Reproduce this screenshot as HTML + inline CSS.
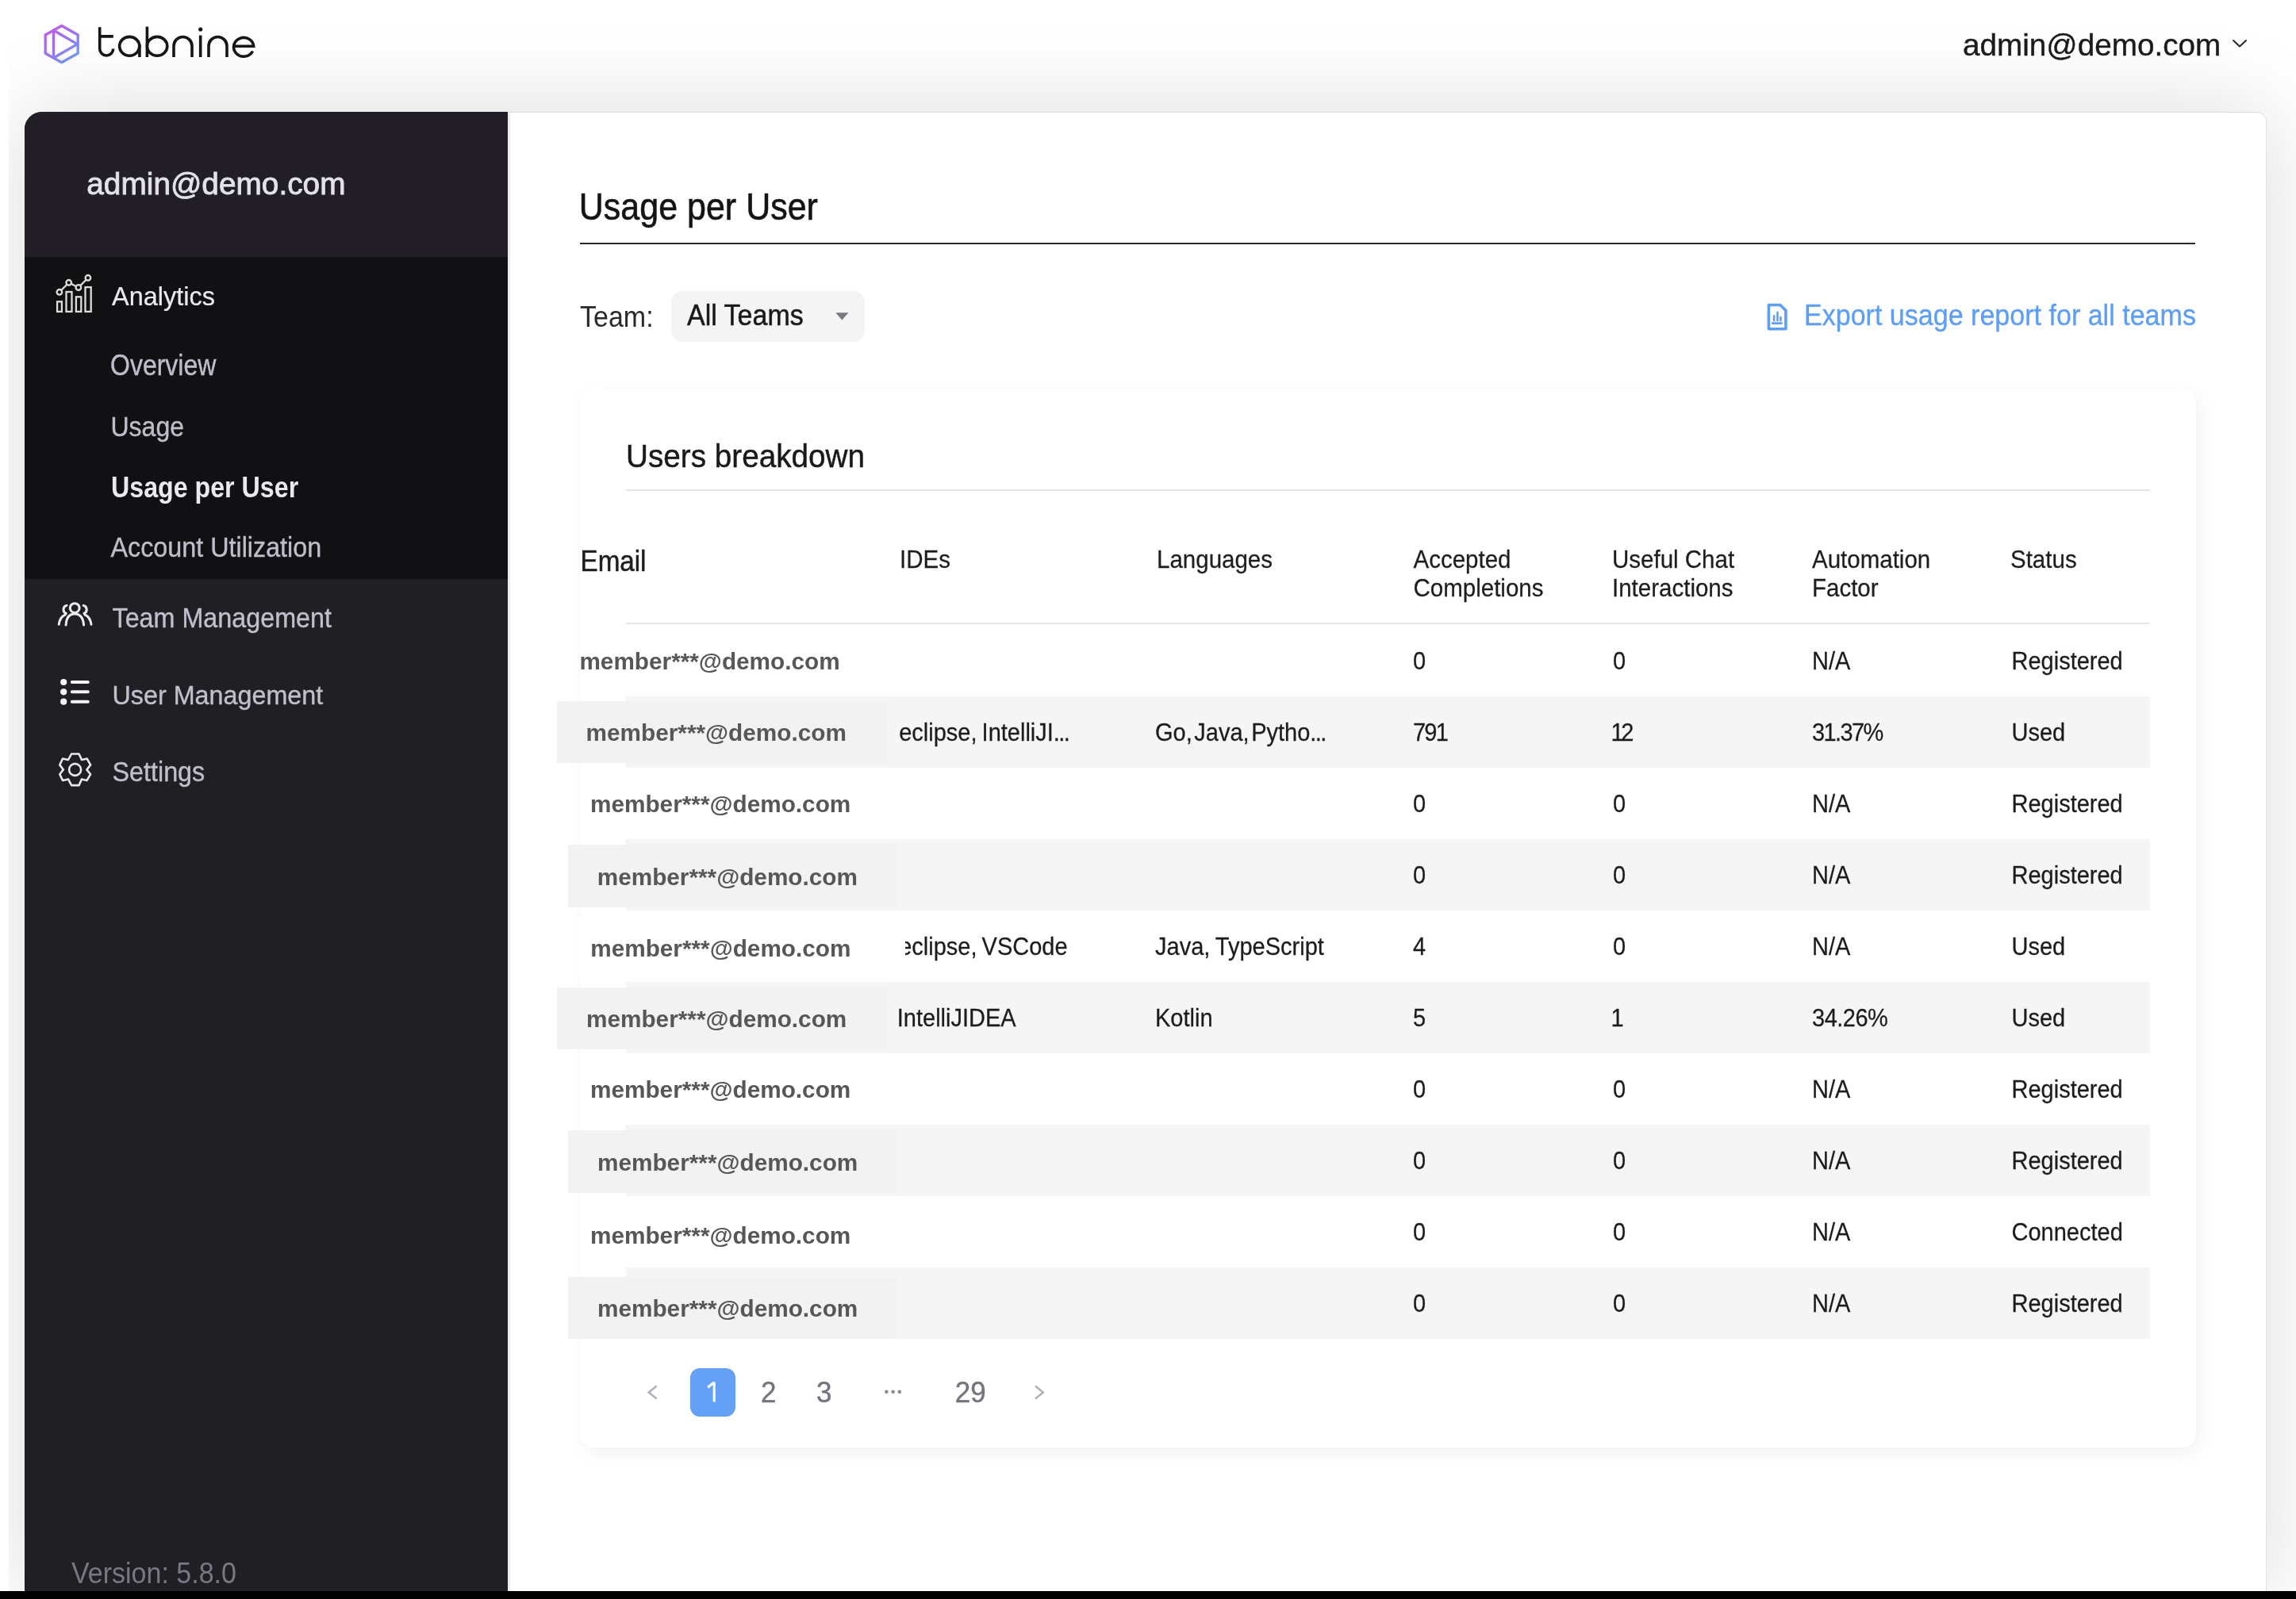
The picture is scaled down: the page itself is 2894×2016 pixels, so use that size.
<!DOCTYPE html>
<html><head><meta charset="utf-8"><style>
html,body{margin:0;padding:0;width:2894px;height:2016px;overflow:hidden;background:#fff;}
body{position:relative;font-family:"Liberation Sans",sans-serif;}
.abs{position:absolute;}
.t{position:absolute;white-space:nowrap;line-height:1;}
#wrap{position:absolute;left:0;top:0;width:2894px;height:2016px;will-change:transform;}
#frame{position:absolute;left:11px;top:0;width:2883px;height:2016px;overflow:hidden;}
#card{position:absolute;left:20px;top:141px;width:2826px;height:1875px;border-radius:22px 12px 0 0;box-shadow:0 0 116px rgba(0,0,0,0.145);background:#fff;}
</style></head><body>
<div id="frame"><div id="card"></div></div>
<div id="wrap">
<div class="t" style="left:2474px;top:37.84px;font-size:38.7px;color:#1b1b1b;-webkit-text-stroke:0.4px #1b1b1b;">admin@demo.com</div>
<svg class="abs" style="left:2800px;top:40px" width="40" height="30" viewBox="2800 40 40 30"><path d="M2815 51 L2823 58.5 L2831 51" fill="none" stroke="#262626" stroke-width="2" stroke-linecap="round" stroke-linejoin="round"/></svg>
<svg class="abs" style="left:0;top:0" width="340" height="100" viewBox="0 0 340 100"><defs><linearGradient id="lg" x1="57" y1="32" x2="98" y2="79" gradientUnits="userSpaceOnUse"><stop offset="0" stop-color="#c855e6"/><stop offset="0.5" stop-color="#9a72ee"/><stop offset="1" stop-color="#62a4f3"/></linearGradient></defs><g fill="none" stroke="url(#lg)" stroke-width="3.3" stroke-linejoin="round" stroke-linecap="round"><path d="M77.7 32.5 L98.2 44 L98.2 67.3 L77.7 78.7 L57.2 67.3 L57.2 44 Z"/><path d="M67.5 38.2 V73 M67.5 38.2 L97.5 55.6 L67.5 73"/></g><g fill="none" stroke="#161616" stroke-width="3.6"><path d="M125.7 34.3 V61.5 A8.5 8.5 0 0 0 142.7 61.5 M125.7 45.9 H142.8"/><ellipse cx="163.2" cy="58.3" rx="12.6" ry="11.9"/><path d="M175.9 56 V72"/><path d="M185.4 33.6 V72"/><ellipse cx="198.1" cy="58.3" rx="12.7" ry="11.9"/><path d="M219 72 V58 A11.5 11.5 0 0 1 242 58 V72"/><path d="M252.7 44.6 V72"/><path d="M263 72 V58 A11.5 11.5 0 0 1 286 58 V72"/><path d="M294.5 58.3 H319.7 A12.6 11.9 0 1 0 318.5 64.5"/></g><circle cx="252.7" cy="37" r="2.6" fill="#161616"/></svg>
<div class="abs" style="left:31px;top:141px;width:609px;height:1865px;background:#201f24;border-top-left-radius:22px;overflow:hidden"><div class="abs" style="left:0;top:0;width:609px;height:183px;background:#211f25"></div><div class="abs" style="left:0;top:183px;width:609px;height:406px;background:#111113"></div></div>
<div class="t" style="left:109.3px;top:213.26px;font-size:38.8px;color:#e4e1ea;transform:scaleY(0.99);transform-origin:0 32.84px;-webkit-text-stroke:0.85px #e4e1ea;">admin@demo.com</div>
<svg class="abs" style="left:0;top:330px" width="140" height="80" viewBox="0 330 140 80"><g fill="none" stroke="#dcdcdc" stroke-width="2.3"><rect x="72.1" y="380.3" width="5.8" height="12.6"/><rect x="83.5" y="368" width="7" height="24.9"/><rect x="95.9" y="374.3" width="6.4" height="18.6"/><rect x="107.5" y="362.1" width="7.2" height="30.8"/><circle cx="74.9" cy="368.3" r="3.3"/><circle cx="86.7" cy="356.3" r="3.3"/><circle cx="98.9" cy="362.5" r="3.3"/><circle cx="110.9" cy="350.3" r="3.3"/><path d="M77.2 365.9 L84.4 358.7 M89.7 357.8 L95.9 361 M101.2 360.1 L108.6 352.7"/></g></svg>
<svg class="abs" style="left:0;top:740px" width="140" height="60" viewBox="0 740 140 60"><g fill="none" stroke="#ececec" stroke-width="3" stroke-linecap="round"><circle cx="94.2" cy="766.6" r="5.9"/><path d="M83.1 788 C83.6 779 87.5 774 94.2 774 C100.9 774 104.8 779 105.6 788"/><path d="M84 763.4 A5.2 5.2 0 0 0 83.3 773.3 M82.4 774.8 C77.5 777 75 781 74.2 787.2"/><path d="M105.2 763.4 A5.2 5.2 0 0 1 105.9 773.3 M106.8 774.8 C111.7 777 114.2 781 115 787.2"/></g></svg>
<svg class="abs" style="left:0;top:840px" width="140" height="60" viewBox="0 840 140 60"><g fill="#f2f2f2"><circle cx="80.2" cy="860" r="4.1"/><circle cx="80.2" cy="872.3" r="4.1"/><circle cx="80.2" cy="884.7" r="4.1"/></g><g stroke="#f2f2f2" stroke-width="4" stroke-linecap="round"><path d="M90.8 860 H110.8 M90.8 872.3 H110.8 M90.8 884.7 H110.8"/></g></svg>
<svg class="abs" style="left:0;top:930px" width="140" height="80" viewBox="0 930 140 80"><g fill="none" stroke="#e8e8e8" stroke-width="2.6" stroke-linejoin="round"><path d="M90.1 950.5 L99.5 950.5 L103 958 L109.6 956.5 L114.1 964.4 L109.4 970.4 L114.1 976.2 L109.6 983.9 L103 982.4 L99.5 990.1 L90.1 990.1 L86 982.4 L79 983.9 L75.3 976.2 L79.8 970.4 L75.3 964.4 L79 956.5 L86 958 Z"/><circle cx="94.6" cy="970.4" r="7.5"/></g></svg>
<div class="t" style="left:141px;top:357.79px;font-size:32.5px;color:#ebe9ee;transform:scaleY(1.03);transform-origin:0 27.51px;-webkit-text-stroke:0.2px #ebe9ee;">Analytics</div>
<div class="t" style="left:139px;top:445.61px;font-size:32px;color:#c0bcc9;transform:scaleY(1.13);transform-origin:0 27.09px;-webkit-text-stroke:0.35px #c0bcc9;">Overview</div>
<div class="t" style="left:139.5px;top:523.31px;font-size:32px;color:#c0bcc9;transform:scaleY(1.12);transform-origin:0 27.09px;-webkit-text-stroke:0.35px #c0bcc9;">Usage</div>
<div class="t" style="left:140px;top:600.34px;font-size:32.2px;color:#ebe9ee;font-weight:700;transform:scaleY(1.13);transform-origin:0 27.26px;">Usage per User</div>
<div class="t" style="left:139.5px;top:675.26px;font-size:32.3px;color:#c0bcc9;transform:scaleY(1.06);transform-origin:0 27.34px;-webkit-text-stroke:0.35px #c0bcc9;">Account Utilization</div>
<div class="t" style="left:141.5px;top:763.56px;font-size:32.3px;color:#c2becb;transform:scaleY(1.06);transform-origin:0 27.34px;-webkit-text-stroke:0.35px #c2becb;">Team Management</div>
<div class="t" style="left:141.5px;top:860.76px;font-size:32.3px;color:#c2becb;transform:scaleY(1.05);transform-origin:0 27.34px;-webkit-text-stroke:0.35px #c2becb;">User Management</div>
<div class="t" style="left:141.5px;top:957.76px;font-size:32.3px;color:#c2becb;transform:scaleY(1.07);transform-origin:0 27.34px;-webkit-text-stroke:0.35px #c2becb;">Settings</div>
<div class="t" style="left:90px;top:1966.72px;font-size:34px;color:#7a7683;transform:scaleY(1.08);transform-origin:0 28.78px;">Version: 5.8.0</div>
<div class="abs" style="left:640px;top:141px;width:2217px;height:1865px;background:#fff;border-top:1.5px solid #dcd9e3;border-left:3.5px solid #eeecf1;box-sizing:border-box;border-top-right-radius:12px;border-right:1.5px solid #e4e1ea"></div>
<div class="t" style="left:729.8px;top:240.90px;font-size:43px;color:#141414;transform:scaleY(1.11);transform-origin:0 36.40px;-webkit-text-stroke:0.55px #141414;">Usage per User</div>
<div class="abs" style="left:731px;top:306px;width:2036px;height:2px;background:#2a2a2a"></div>
<div class="t" style="left:731px;top:383.42px;font-size:34px;color:#2a2a2a;transform:scaleY(1.09);transform-origin:0 28.78px;">Team:</div>
<div class="abs" style="left:846px;top:367px;width:244px;height:64px;background:#f4f4f5;border-radius:14px"></div>
<div class="t" style="left:866px;top:380.82px;font-size:34px;color:#1a1a1a;transform:scaleY(1.06);transform-origin:0 28.78px;-webkit-text-stroke:0.5px #1a1a1a;">All Teams</div>
<svg class="abs" style="left:1050px;top:390px" width="24" height="18" viewBox="1050 390 24 18"><path d="M1053.3 394.3 L1069.4 394.3 L1061.35 403.6 Z" fill="#7a7682"/></svg>
<svg class="abs" style="left:2200px;top:370px" width="70" height="60" viewBox="2200 370 70 60"><g fill="none" stroke="#5f9ef5" stroke-width="3.6" stroke-linejoin="round"><path d="M2229.4 384.5 H2243.8 L2250.9 391.4 V414.8 H2229.4 Z"/></g><g stroke="#5f9ef5" stroke-width="2.6" stroke-linecap="round"><path d="M2236.1 398.3 V404.2 M2240.5 393.9 V404.2 M2244.4 400.1 V404.2 M2234 407.6 H2245.6"/></g></svg>
<div class="t" style="left:2274px;top:380.78px;font-size:34.05px;color:#5c9ef7;transform:scaleY(1.07);transform-origin:0 28.82px;-webkit-text-stroke:0.3px #5c9ef7;">Export usage report for all teams</div>
<div class="abs" style="left:731px;top:489px;width:2037px;height:1336px;background:#fff;border-radius:16px;box-shadow:5px 8px 26px rgba(0,0,0,0.05), 0 0 8px rgba(0,0,0,0.012)"></div>
<div class="t" style="left:789px;top:556.64px;font-size:38.7px;color:#1a1a1a;transform:scaleY(1.07);transform-origin:0 32.76px;-webkit-text-stroke:0.45px #1a1a1a;">Users breakdown</div>
<div class="abs" style="left:789px;top:617px;width:1921px;height:2px;background:#e3e1ea"></div>
<div class="t" style="left:731.5px;top:692.20px;font-size:33.2px;color:#1e1e1e;transform:scaleY(1.09);transform-origin:0 28.10px;-webkit-text-stroke:0.5px #1e1e1e;">Email</div>
<div class="t" style="left:1134px;top:690.73px;font-size:29.5px;color:#1e1e1e;transform:scaleY(1.06);transform-origin:0 24.97px;-webkit-text-stroke:0.25px #1c1c1c;">IDEs</div>
<div class="t" style="left:1458px;top:690.73px;font-size:29.5px;color:#1e1e1e;transform:scaleY(1.06);transform-origin:0 24.97px;-webkit-text-stroke:0.25px #1c1c1c;">Languages</div>
<div class="t" style="left:1781.5px;top:690.73px;font-size:29.5px;color:#1e1e1e;transform:scaleY(1.06);transform-origin:0 24.97px;-webkit-text-stroke:0.25px #1c1c1c;">Accepted</div>
<div class="t" style="left:1781.5px;top:727.03px;font-size:29.5px;color:#1e1e1e;transform:scaleY(1.06);transform-origin:0 24.97px;-webkit-text-stroke:0.25px #1c1c1c;">Completions</div>
<div class="t" style="left:2032px;top:690.73px;font-size:29.5px;color:#1e1e1e;transform:scaleY(1.06);transform-origin:0 24.97px;-webkit-text-stroke:0.25px #1c1c1c;">Useful Chat</div>
<div class="t" style="left:2032px;top:727.03px;font-size:29.5px;color:#1e1e1e;transform:scaleY(1.06);transform-origin:0 24.97px;-webkit-text-stroke:0.25px #1c1c1c;">Interactions</div>
<div class="t" style="left:2284px;top:690.73px;font-size:29.5px;color:#1e1e1e;transform:scaleY(1.06);transform-origin:0 24.97px;-webkit-text-stroke:0.25px #1c1c1c;">Automation</div>
<div class="t" style="left:2284px;top:727.03px;font-size:29.5px;color:#1e1e1e;transform:scaleY(1.06);transform-origin:0 24.97px;-webkit-text-stroke:0.25px #1c1c1c;">Factor</div>
<div class="t" style="left:2534px;top:690.73px;font-size:29.5px;color:#1e1e1e;transform:scaleY(1.06);transform-origin:0 24.97px;-webkit-text-stroke:0.25px #1c1c1c;">Status</div>
<div class="abs" style="left:789px;top:785px;width:1921px;height:2px;background:#e6e5eb"></div>
<div class="t" style="left:730.4px;top:819.02px;font-size:29.75px;color:#575757;font-weight:700;">member***@demo.com</div>
<div class="t" style="left:1781px;top:819.65px;font-size:29px;color:#1c1c1c;transform:scaleY(1.07);transform-origin:0 24.55px;-webkit-text-stroke:0.25px #1c1c1c;">0</div>
<div class="t" style="left:2033px;top:819.65px;font-size:29px;color:#1c1c1c;transform:scaleY(1.07);transform-origin:0 24.55px;-webkit-text-stroke:0.25px #1c1c1c;">0</div>
<div class="t" style="left:2284px;top:819.65px;font-size:29px;color:#1c1c1c;transform:scaleY(1.07);transform-origin:0 24.55px;-webkit-text-stroke:0.25px #1c1c1c;">N/A</div>
<div class="t" style="left:2535.5px;top:819.65px;font-size:29px;color:#1c1c1c;transform:scaleY(1.07);transform-origin:0 24.55px;-webkit-text-stroke:0.25px #1c1c1c;">Registered</div>
<div class="abs" style="left:789px;top:877.68px;width:1921px;height:90.07px;background:#f5f5f5"></div>
<div class="t" style="left:1133.2px;top:909.73px;font-size:29px;color:#1c1c1c;word-spacing:-2px;transform:scaleY(1.06);transform-origin:0 24.55px;-webkit-text-stroke:0.25px #1c1c1c;">eclipse, IntelliJI<span style="letter-spacing:-1.6px">..</span>.</div>
<div class="t" style="left:1456px;top:909.73px;font-size:29px;color:#1c1c1c;word-spacing:-5.5px;transform:scaleY(1.06);transform-origin:0 24.55px;-webkit-text-stroke:0.25px #1c1c1c;">Go, Java, Pytho<span style="letter-spacing:-1.6px">..</span>.</div>
<div class="abs" style="left:702px;top:883.5px;width:416px;height:78.3px;background:#f2f2f2"></div>
<div class="t" style="left:738.6px;top:908.72px;font-size:29.75px;color:#575757;font-weight:700;">member***@demo.com</div>
<div class="t" style="left:1781px;top:909.73px;font-size:29px;color:#1c1c1c;letter-spacing:-1.8px;transform:scaleY(1.07);transform-origin:0 24.55px;-webkit-text-stroke:0.25px #1c1c1c;">791</div>
<div class="t" style="left:2030.5px;top:909.73px;font-size:29px;color:#1c1c1c;letter-spacing:-3.5px;transform:scaleY(1.07);transform-origin:0 24.55px;-webkit-text-stroke:0.25px #1c1c1c;">12</div>
<div class="t" style="left:2284px;top:909.73px;font-size:29px;color:#1c1c1c;letter-spacing:-1.6px;transform:scaleY(1.07);transform-origin:0 24.55px;-webkit-text-stroke:0.25px #1c1c1c;">31.37%</div>
<div class="t" style="left:2535.5px;top:909.73px;font-size:29px;color:#1c1c1c;transform:scaleY(1.07);transform-origin:0 24.55px;-webkit-text-stroke:0.25px #1c1c1c;">Used</div>
<div class="t" style="left:744px;top:999.42px;font-size:29.75px;color:#575757;font-weight:700;">member***@demo.com</div>
<div class="t" style="left:1781px;top:999.81px;font-size:29px;color:#1c1c1c;transform:scaleY(1.07);transform-origin:0 24.55px;-webkit-text-stroke:0.25px #1c1c1c;">0</div>
<div class="t" style="left:2033px;top:999.81px;font-size:29px;color:#1c1c1c;transform:scaleY(1.07);transform-origin:0 24.55px;-webkit-text-stroke:0.25px #1c1c1c;">0</div>
<div class="t" style="left:2284px;top:999.81px;font-size:29px;color:#1c1c1c;transform:scaleY(1.07);transform-origin:0 24.55px;-webkit-text-stroke:0.25px #1c1c1c;">N/A</div>
<div class="t" style="left:2535.5px;top:999.81px;font-size:29px;color:#1c1c1c;transform:scaleY(1.07);transform-origin:0 24.55px;-webkit-text-stroke:0.25px #1c1c1c;">Registered</div>
<div class="abs" style="left:789px;top:1057.84px;width:1921px;height:90.07px;background:#f5f5f5"></div>
<div class="abs" style="left:716px;top:1065.4px;width:416px;height:78.3px;background:#f2f2f2"></div>
<div class="t" style="left:752.7px;top:1090.62px;font-size:29.75px;color:#575757;font-weight:700;">member***@demo.com</div>
<div class="t" style="left:1781px;top:1089.89px;font-size:29px;color:#1c1c1c;transform:scaleY(1.07);transform-origin:0 24.55px;-webkit-text-stroke:0.25px #1c1c1c;">0</div>
<div class="t" style="left:2033px;top:1089.89px;font-size:29px;color:#1c1c1c;transform:scaleY(1.07);transform-origin:0 24.55px;-webkit-text-stroke:0.25px #1c1c1c;">0</div>
<div class="t" style="left:2284px;top:1089.89px;font-size:29px;color:#1c1c1c;transform:scaleY(1.07);transform-origin:0 24.55px;-webkit-text-stroke:0.25px #1c1c1c;">N/A</div>
<div class="t" style="left:2535.5px;top:1089.89px;font-size:29px;color:#1c1c1c;transform:scaleY(1.07);transform-origin:0 24.55px;-webkit-text-stroke:0.25px #1c1c1c;">Registered</div>
<div class="t" style="left:1133.2px;top:1179.97px;font-size:29px;color:#1c1c1c;word-spacing:-2px;transform:scaleY(1.06);transform-origin:0 24.55px;-webkit-text-stroke:0.25px #1c1c1c;">eclipse, VSCode</div>
<div class="t" style="left:1456px;top:1179.97px;font-size:29px;color:#1c1c1c;word-spacing:-1px;transform:scaleY(1.06);transform-origin:0 24.55px;-webkit-text-stroke:0.25px #1c1c1c;">Java, TypeScript</div>
<div class="abs" style="left:725px;top:1155.4px;width:416px;height:78.3px;background:#fff"></div>
<div class="t" style="left:744.2px;top:1180.62px;font-size:29.75px;color:#575757;font-weight:700;">member***@demo.com</div>
<div class="t" style="left:1781px;top:1179.97px;font-size:29px;color:#1c1c1c;transform:scaleY(1.07);transform-origin:0 24.55px;-webkit-text-stroke:0.25px #1c1c1c;">4</div>
<div class="t" style="left:2033px;top:1179.97px;font-size:29px;color:#1c1c1c;transform:scaleY(1.07);transform-origin:0 24.55px;-webkit-text-stroke:0.25px #1c1c1c;">0</div>
<div class="t" style="left:2284px;top:1179.97px;font-size:29px;color:#1c1c1c;transform:scaleY(1.07);transform-origin:0 24.55px;-webkit-text-stroke:0.25px #1c1c1c;">N/A</div>
<div class="t" style="left:2535.5px;top:1179.97px;font-size:29px;color:#1c1c1c;transform:scaleY(1.07);transform-origin:0 24.55px;-webkit-text-stroke:0.25px #1c1c1c;">Used</div>
<div class="abs" style="left:789px;top:1238.0px;width:1921px;height:90.07px;background:#f5f5f5"></div>
<div class="t" style="left:1130.8px;top:1270.05px;font-size:29px;color:#1c1c1c;word-spacing:-2px;transform:scaleY(1.06);transform-origin:0 24.55px;-webkit-text-stroke:0.25px #1c1c1c;">IntelliJIDEA</div>
<div class="t" style="left:1456px;top:1270.05px;font-size:29px;color:#1c1c1c;word-spacing:-1px;transform:scaleY(1.06);transform-origin:0 24.55px;-webkit-text-stroke:0.25px #1c1c1c;">Kotlin</div>
<div class="abs" style="left:702px;top:1244.5px;width:416px;height:78.3px;background:#f2f2f2"></div>
<div class="t" style="left:739px;top:1269.72px;font-size:29.75px;color:#575757;font-weight:700;">member***@demo.com</div>
<div class="t" style="left:1781px;top:1270.05px;font-size:29px;color:#1c1c1c;transform:scaleY(1.07);transform-origin:0 24.55px;-webkit-text-stroke:0.25px #1c1c1c;">5</div>
<div class="t" style="left:2030.5px;top:1270.05px;font-size:29px;color:#1c1c1c;transform:scaleY(1.07);transform-origin:0 24.55px;-webkit-text-stroke:0.25px #1c1c1c;">1</div>
<div class="t" style="left:2284px;top:1270.05px;font-size:29px;color:#1c1c1c;letter-spacing:-0.5px;transform:scaleY(1.07);transform-origin:0 24.55px;-webkit-text-stroke:0.25px #1c1c1c;">34.26%</div>
<div class="t" style="left:2535.5px;top:1270.05px;font-size:29px;color:#1c1c1c;transform:scaleY(1.07);transform-origin:0 24.55px;-webkit-text-stroke:0.25px #1c1c1c;">Used</div>
<div class="t" style="left:744px;top:1359.22px;font-size:29.75px;color:#575757;font-weight:700;">member***@demo.com</div>
<div class="t" style="left:1781px;top:1360.13px;font-size:29px;color:#1c1c1c;transform:scaleY(1.07);transform-origin:0 24.55px;-webkit-text-stroke:0.25px #1c1c1c;">0</div>
<div class="t" style="left:2033px;top:1360.13px;font-size:29px;color:#1c1c1c;transform:scaleY(1.07);transform-origin:0 24.55px;-webkit-text-stroke:0.25px #1c1c1c;">0</div>
<div class="t" style="left:2284px;top:1360.13px;font-size:29px;color:#1c1c1c;transform:scaleY(1.07);transform-origin:0 24.55px;-webkit-text-stroke:0.25px #1c1c1c;">N/A</div>
<div class="t" style="left:2535.5px;top:1360.13px;font-size:29px;color:#1c1c1c;transform:scaleY(1.07);transform-origin:0 24.55px;-webkit-text-stroke:0.25px #1c1c1c;">Registered</div>
<div class="abs" style="left:789px;top:1418.16px;width:1921px;height:90.07px;background:#f5f5f5"></div>
<div class="abs" style="left:716px;top:1425.4px;width:416px;height:78.3px;background:#f2f2f2"></div>
<div class="t" style="left:753px;top:1450.62px;font-size:29.75px;color:#575757;font-weight:700;">member***@demo.com</div>
<div class="t" style="left:1781px;top:1450.21px;font-size:29px;color:#1c1c1c;transform:scaleY(1.07);transform-origin:0 24.55px;-webkit-text-stroke:0.25px #1c1c1c;">0</div>
<div class="t" style="left:2033px;top:1450.21px;font-size:29px;color:#1c1c1c;transform:scaleY(1.07);transform-origin:0 24.55px;-webkit-text-stroke:0.25px #1c1c1c;">0</div>
<div class="t" style="left:2284px;top:1450.21px;font-size:29px;color:#1c1c1c;transform:scaleY(1.07);transform-origin:0 24.55px;-webkit-text-stroke:0.25px #1c1c1c;">N/A</div>
<div class="t" style="left:2535.5px;top:1450.21px;font-size:29px;color:#1c1c1c;transform:scaleY(1.07);transform-origin:0 24.55px;-webkit-text-stroke:0.25px #1c1c1c;">Registered</div>
<div class="t" style="left:744px;top:1542.92px;font-size:29.75px;color:#575757;font-weight:700;">member***@demo.com</div>
<div class="t" style="left:1781px;top:1540.29px;font-size:29px;color:#1c1c1c;transform:scaleY(1.07);transform-origin:0 24.55px;-webkit-text-stroke:0.25px #1c1c1c;">0</div>
<div class="t" style="left:2033px;top:1540.29px;font-size:29px;color:#1c1c1c;transform:scaleY(1.07);transform-origin:0 24.55px;-webkit-text-stroke:0.25px #1c1c1c;">0</div>
<div class="t" style="left:2284px;top:1540.29px;font-size:29px;color:#1c1c1c;transform:scaleY(1.07);transform-origin:0 24.55px;-webkit-text-stroke:0.25px #1c1c1c;">N/A</div>
<div class="t" style="left:2535.5px;top:1540.29px;font-size:29px;color:#1c1c1c;transform:scaleY(1.07);transform-origin:0 24.55px;-webkit-text-stroke:0.25px #1c1c1c;">Connected</div>
<div class="abs" style="left:789px;top:1598.32px;width:1921px;height:90.07px;background:#f5f5f5"></div>
<div class="abs" style="left:716px;top:1610.2px;width:416px;height:78.3px;background:#f2f2f2"></div>
<div class="t" style="left:753px;top:1635.42px;font-size:29.75px;color:#575757;font-weight:700;">member***@demo.com</div>
<div class="t" style="left:1781px;top:1630.37px;font-size:29px;color:#1c1c1c;transform:scaleY(1.07);transform-origin:0 24.55px;-webkit-text-stroke:0.25px #1c1c1c;">0</div>
<div class="t" style="left:2033px;top:1630.37px;font-size:29px;color:#1c1c1c;transform:scaleY(1.07);transform-origin:0 24.55px;-webkit-text-stroke:0.25px #1c1c1c;">0</div>
<div class="t" style="left:2284px;top:1630.37px;font-size:29px;color:#1c1c1c;transform:scaleY(1.07);transform-origin:0 24.55px;-webkit-text-stroke:0.25px #1c1c1c;">N/A</div>
<div class="t" style="left:2535.5px;top:1630.37px;font-size:29px;color:#1c1c1c;transform:scaleY(1.07);transform-origin:0 24.55px;-webkit-text-stroke:0.25px #1c1c1c;">Registered</div>
<svg class="abs" style="left:805px;top:1735px" width="40" height="40" viewBox="805 1735 40 40"><path d="M827.6 1747.5 L817.8 1755.5 L827.6 1763.5" fill="none" stroke="#b3b0b9" stroke-width="2.6" stroke-linecap="butt" stroke-linejoin="miter"/></svg>
<div class="abs" style="left:870px;top:1725px;width:57px;height:61px;background:#64a0f5;border-radius:12px"></div>
<svg class="abs" style="left:880px;top:1735px" width="40" height="40" viewBox="880 1735 40 40"><path d="M900.2 1767.6 V1742.6 M900.2 1742.6 L892.2 1749.2" fill="none" stroke="#fff" stroke-width="3.1" stroke-linecap="butt" stroke-linejoin="round"/></svg>
<div class="t" style="left:959px;top:1737.87px;font-size:35px;color:#77737f;transform:scaleY(1.04);transform-origin:0 29.63px;-webkit-text-stroke:0.4px #77737f;">2</div>
<div class="t" style="left:1029px;top:1737.87px;font-size:35px;color:#77737f;transform:scaleY(1.04);transform-origin:0 29.63px;-webkit-text-stroke:0.4px #77737f;">3</div>
<svg class="abs" style="left:1100px;top:1740px" width="50" height="30" viewBox="1100 1740 50 30"><g fill="#8b8890"><circle cx="1117.4" cy="1754.8" r="2.3"/><circle cx="1125.6" cy="1754.8" r="2.3"/><circle cx="1133.8" cy="1754.8" r="2.3"/></g></svg>
<div class="t" style="left:1203.7px;top:1737.87px;font-size:35px;color:#77737f;transform:scaleY(1.04);transform-origin:0 29.63px;-webkit-text-stroke:0.4px #77737f;">29</div>
<svg class="abs" style="left:1290px;top:1735px" width="40" height="40" viewBox="1290 1735 40 40"><path d="M1305 1747.5 L1314.8 1755.5 L1305 1763.5" fill="none" stroke="#b3b0b9" stroke-width="2.6" stroke-linecap="butt" stroke-linejoin="miter"/></svg>
<div class="abs" style="left:0;top:2006px;width:2894px;height:10px;background:#000"></div>
</div></body></html>
